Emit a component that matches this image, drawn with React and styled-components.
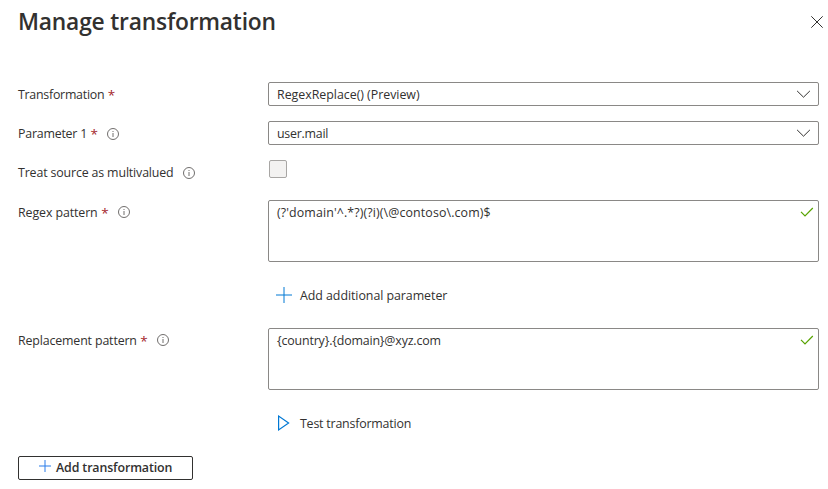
import React from 'react';
import styled, { createGlobalStyle } from 'styled-components';

const GlobalStyle = createGlobalStyle`
  *, *::before, *::after { box-sizing: border-box; }
  body {
    margin: 0;
    background: #fff;
    color: #323130;
    font-family: "Open Sans", "Noto Sans", sans-serif;
    font-size: 12.4px;
    line-height: 18px;
  }
`;

const Panel = styled.main`
  width: 828px;
  height: 489px;
  padding: 0 9px 0 18px;
  display: flex;
  flex-direction: column;
  align-items: stretch;
  overflow: hidden;
`;

const Header = styled.header`
  height: 82px;
  padding-top: 6px;
  display: flex;
  justify-content: space-between;
  align-items: flex-start;
`;

const Title = styled.h1`
  margin: 0;
  font-size: 22.8px;
  font-weight: 600;
  line-height: 32px;
  letter-spacing: -0.2px;
`;

const IconButton = styled.button`
  margin: 10px -4px 0 0;
  padding: 0;
  width: 12px;
  height: 12px;
  border: 0;
  background: none;
  display: flex;
`;

const Form = styled.div`
  display: grid;
  grid-template-columns: 250px 1fr;
  grid-template-rows: 24px 24px 25px 62px 36px 62px 36px;
  row-gap: 15px;
`;

const Label = styled.label`
  height: 24px;
  display: flex;
  align-items: flex-start;
`;

const Text = styled.span`
  white-space: pre;
  letter-spacing: ${({ $tracking = 0 }) => $tracking}px;
`;

const LabelText = styled(Text)`
  padding-top: 4px;
`;

const Required = styled.span`
  margin-left: 3.5px;
  padding-top: 4px;
  width: 7.5px;
  color: #a4262c;
  font-size: 13.5px;
  font-weight: 500;
`;

const InfoIcon = styled.svg`
  display: block;
  margin: ${({ $top }) => $top}px 0 0 9.2px;
`;

const Select = styled.div`
  height: 24px;
  padding: 2px 8px 0;
  border: 1px solid #8a8886;
  border-radius: 2px;
  display: flex;
  justify-content: space-between;
  align-items: center;
`;

const ChevronIcon = styled.svg`
  display: block;
  margin-bottom: 2px;
`;

const TextArea = styled.div`
  height: 62px;
  padding: 3px 4px 0 8px;
  border: 1px solid #8a8886;
  border-radius: 2px;
  display: flex;
  justify-content: space-between;
  align-items: flex-start;
`;

const Checkbox = styled.span`
  width: 18px;
  height: 18px;
  margin-left: 1px;
  border: 1px solid #a8a6a4;
  border-radius: 2px;
  background: #f3f2f1;
`;

const Action = styled.button`
  grid-column: 2;
  height: 36px;
  padding: 0 0 0 8px;
  border: 0;
  background: none;
  color: inherit;
  font: inherit;
  display: flex;
  align-items: center;
  gap: 8px;

  ${Text} { padding-top: 2px; }
`;

const AddButton = styled.button`
  align-self: flex-start;
  width: 175px;
  height: 24px;
  margin-top: 15px;
  padding: 0 0 0 20px;
  border: 1px solid #323130;
  border-radius: 2px;
  background: #fff;
  color: inherit;
  font: inherit;
  font-weight: 600;
  display: flex;
  align-items: center;
  gap: 5px;
`;

const PlusIcon = styled.svg`
  display: block;
  flex: none;
  margin-bottom: ${({ $lift = 0 }) => $lift}px;
`;

const CheckIcon = styled.svg`
  display: block;
  margin-top: 3px;
`;

const Chevron = () => (
  <ChevronIcon width="14" height="8" viewBox="0 0 14 8" fill="none" stroke="#323130">
    <path d="M1.1 0.9 L7.5 7.2 L13.9 0.9" />
  </ChevronIcon>
);

const Check = () => (
  <CheckIcon width="14" height="10" viewBox="0 0 14 10" fill="none" stroke="#57a300" strokeWidth="1.2">
    <path d="M1 4.8 L5 8.8 L12.8 1" />
  </CheckIcon>
);

const Info = ({ top }) => (
  <InfoIcon $top={top} width="12" height="12" viewBox="0 0 12 12" fill="none" stroke="#605e5c">
    <circle cx="6" cy="6" r="5.5" strokeWidth="0.9" />
    <path d="M6 5V9M6 3V4" strokeWidth="0.9" />
  </InfoIcon>
);

const Plus = ({ size, color, lift }) => (
  <PlusIcon $lift={lift} width={size} height={size} viewBox={`0 0 ${size} ${size}`} stroke={color}>
    <path d={`M${size / 2} 0V${size}M0 ${size / 2}H${size}`} />
  </PlusIcon>
);

const Field = ({ label, tracking, required, info, infoTop = 7, children }) => (
  <>
    <Label>
      <LabelText $tracking={tracking}>{label}</LabelText>
      {required && <Required>*</Required>}
      {info && <Info top={infoTop} />}
    </Label>
    {children}
  </>
);

export default function App() {
  return (
    <>
      <GlobalStyle />
      <Panel>
        <Header>
          <Title>Manage transformation</Title>
          <IconButton aria-label="Close">
            <svg width="12" height="12" viewBox="0 0 12 12" stroke="#323130">
              <path d="M0.3 0.3L11.7 11.7M11.7 0.3L0.3 11.7" />
            </svg>
          </IconButton>
        </Header>
        <Form>
          <Field label="Transformation" tracking={-0.26} required>
            <Select>
              <Text $tracking={-0.02}>RegexReplace() (Preview)</Text>
              <Chevron />
            </Select>
          </Field>
          <Field label="Parameter 1" tracking={-0.22} required info>
            <Select>
              <Text $tracking={-0.25}>user.mail</Text>
              <Chevron />
            </Select>
          </Field>
          <Field label="Treat source as multivalued" tracking={-0.15} info>
            <Checkbox />
          </Field>
          <Field label="Regex pattern" tracking={-0.1} required info infoTop={6}>
            <TextArea>
              <Text $tracking={0.12}>{"(?'domain'^.*?)(?i)(\\@contoso\\.com)$"}</Text>
              <Check />
            </TextArea>
          </Field>
          <Action>
            <Plus size={16} color="#0078d4" />
            <Text $tracking={-0.05}>Add additional parameter</Text>
          </Action>
          <Field label="Replacement pattern" tracking={-0.15} required info infoTop={6}>
            <TextArea>
              <Text $tracking={-0.16}>{'{country}.{domain}@xyz.com'}</Text>
              <Check />
            </TextArea>
          </Field>
          <Action>
            <svg width="16" height="16" viewBox="0 0 16 16" fill="none" stroke="#0078d4" strokeWidth="1.2">
              <path d="M2.6 1.1V14.9L12.6 8Z" />
            </svg>
            <Text $tracking={-0.2}>Test transformation</Text>
          </Action>
        </Form>
        <AddButton>
          <Plus size={12} color="#2b7de9" lift={4} />
          <Text $tracking={-0.12}>Add transformation</Text>
        </AddButton>
      </Panel>
    </>
  );
}
